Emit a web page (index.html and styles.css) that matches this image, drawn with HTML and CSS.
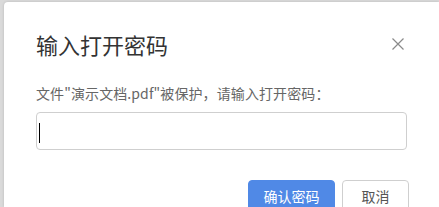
FILE: index.html
```html
<!DOCTYPE html>
<html lang="zh-CN">
<head>
  <meta charset="UTF-8">
  <meta name="viewport" content="width=device-width, initial-scale=1.0">
  <title>输入打开密码</title>
  <link rel="stylesheet" href="styles.css">
</head>
<body>

  <div class="dialog">
    <div class="dialog-header">
      <span class="title">输入打开密码</span>
      <span class="close">
        <svg width="12" height="12" viewBox="0 0 12 12">
          <path d="M0.5 0.5 L11.5 11.5 M11.5 0.5 L0.5 11.5" stroke="#8a8a8a" stroke-width="1.2" fill="none"/>
        </svg>
      </span>
    </div>
    <p class="desc">文件"演示文档.pdf"被保护，请输入打开密码：</p>
    <div class="password">
      <span class="caret"></span>
    </div>
    <div class="dialog-footer">
      <span class="btn btn-primary">确认密码</span>
      <span class="btn">取消</span>
    </div>
  </div>

</body>
</html>
```

FILE: styles.css
```css
* {
  margin: 0;
  padding: 0;
  box-sizing: border-box;
}

html, body {
  height: 100%;
  overflow: hidden;
}

body {
  background-color: #dadada;
  font-family: "Noto Sans CJK SC", "Noto Sans", sans-serif;
}

.dialog {
  width: 435px;
  height: 205px;
  margin: 2px 0 0 4px;
  padding: 27px 32px 0;
  background-color: #fff;
  border-radius: 4px 0 0 0;
  box-shadow: 0 0 3px rgba(0, 0, 0, 0.15);
  overflow: hidden;
}

.dialog-header {
  display: flex;
  justify-content: space-between;
  align-items: center;
  height: 30px;
}

.title {
  font-size: 22px;
  line-height: 30px;
  color: #333;
}

.close {
  display: flex;
  margin-right: 3px;
  margin-top: -1px;
}

.desc {
  margin-top: 24px;
  font-size: 14px;
  line-height: 20px;
  color: #666;
  white-space: nowrap;
  letter-spacing: 0.1px;
}

.password {
  margin-top: 9px;
  height: 38px;
  border: 1px solid #cfcfcf;
  border-radius: 4px;
  display: flex;
  align-items: center;
  padding-left: 2px;
}

.caret {
  width: 1px;
  height: 20px;
  margin-top: 4px;
  background-color: #000;
}

.dialog-footer {
  margin-top: 30px;
  margin-right: -2px;
  display: flex;
  justify-content: flex-end;
  gap: 7px;
}

.btn {
  height: 32px;
  width: 67px;
  border: 1px solid #cfcfcf;
  border-radius: 4px;
  display: flex;
  justify-content: center;
  align-items: center;
  font-size: 14px;
  color: #555;
  background-color: #fff;
}

.btn-primary {
  width: 87px;
  border-color: #5089e6;
  background-color: #5089e6;
  color: #fff;
}
```
